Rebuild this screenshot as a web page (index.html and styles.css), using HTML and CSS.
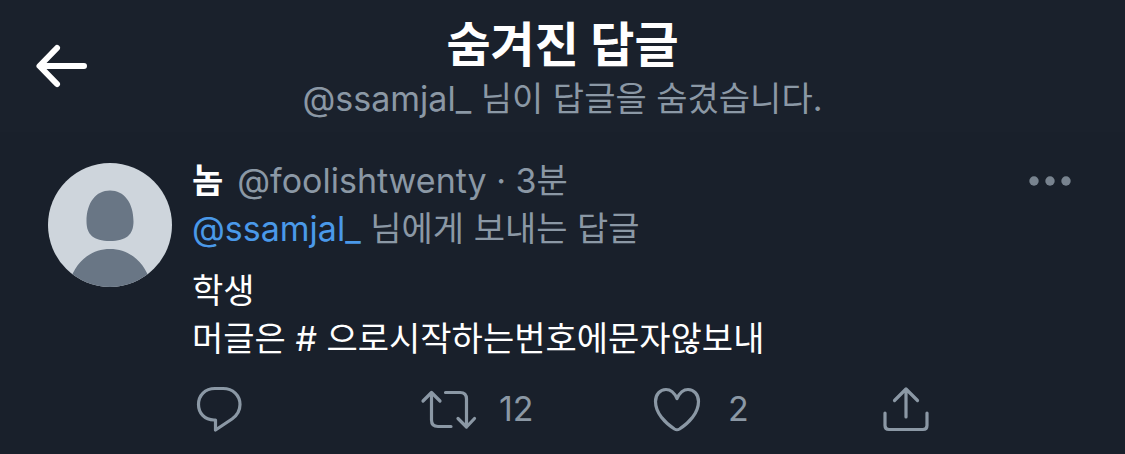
FILE: index.html
```html
<!DOCTYPE html>
<html lang="ko">
<head>
<meta charset="utf-8">
<meta name="viewport" content="width=device-width, initial-scale=1">
<title>숨겨진 답글</title>
<link rel="stylesheet" href="styles.css">
</head>
<body>
<header class="topbar">
  <button class="icon-button back" type="button" aria-label="뒤로">
    <svg width="52" height="44" viewBox="0 0 52 44" fill="none" stroke="currentColor" stroke-width="6" stroke-linecap="round" stroke-linejoin="round"><path d="M21 4 3.500 22 21 40M4 22h44"/></svg>
  </button>
  <div class="heading">
    <h1 class="title">숨겨진 답글</h1>
    <p class="subtitle">@ssamjal_ 님이 답글을 숨겼습니다.</p>
  </div>
</header>
<main>
  <article class="post">
    <svg class="avatar" viewBox="0 0 124 124" role="img" aria-label="프로필 사진">
      <defs><clipPath id="round"><circle cx="62" cy="62" r="62"/></clipPath></defs>
      <g clip-path="url(#round)">
        <path fill="#ced5dc" d="M0 0h124v124H0z"/>
        <path fill="#697685" d="M62 27.500c14 0 23.500 12 23.500 31 0 13-7 19.500-23.500 19.500s-23.500-6.500-23.500-19.500c0-19 9.500-31 23.500-31zM22 118c5-18 20-32 40-32s35 14 40 32v6H22z"/>
      </g>
    </svg>
    <div class="content">
      <div class="byline">
        <span class="name">놈</span>
        <span class="meta">@foolishtwenty · 3분</span>
        <button class="icon-button more" type="button" aria-label="더 보기">
          <svg width="42" height="10" viewBox="0 0 42 10" fill="currentColor"><circle cx="5" cy="5" r="4.700"/><circle cx="21" cy="5" r="4.700"/><circle cx="37" cy="5" r="4.700"/></svg>
        </button>
      </div>
      <p class="reply-to"><a class="mention" href="#ssamjal_">@ssamjal_</a> 님에게 보내는 답글</p>
      <p class="text">학생<br>머글은 # 으로시작하는번호에문자않보내</p>
      <div class="actions">
        <button class="icon-button action" type="button" aria-label="답글">
          <svg width="54" height="46" viewBox="0 0 54 46" fill="none" stroke="currentColor" stroke-width="3.200" stroke-linejoin="round"><path d="M23 2.500h8C41 2.500 48 9.500 48 18.500c0 6-3 11-8 14.500L23.500 44V34H22C12.500 34 6.500 27 6.500 18.500 6.500 9.500 13 2.500 23 2.500z"/></svg>
        </button>
        <button class="icon-button action" type="button" aria-label="리트윗 12">
          <svg width="54" height="46" viewBox="0 0 54 46" fill="none" stroke="currentColor" stroke-width="3.200" stroke-linecap="round" stroke-linejoin="round"><path d="M2 15 10.500 6.500 19 15M10.500 7v27q0 6.500 6.500 6.500H30M24.500 6.500H39q6.500 0 6.500 6.500v27.500M37 32.500 45.500 41l8-8.500"/></svg>
          <span>12</span>
        </button>
        <button class="icon-button action" type="button" aria-label="마음 2">
          <svg width="54" height="46" viewBox="0 0 54 46" fill="none" stroke="currentColor" stroke-width="3.200" stroke-linejoin="round"><path d="M27 12.500C24 6 20 3.500 16 3.500c-6 0-10.500 5-10.500 12C5.500 27 15 37 24.500 43q2.500 1.500 5 0C39 37 48.500 27 48.500 15.500c0-7-4.500-12-10.500-12-4 0-8 2.500-11 9z"/></svg>
          <span>2</span>
        </button>
        <button class="icon-button action" type="button" aria-label="공유">
          <svg width="54" height="46" viewBox="0 0 54 46" fill="none" stroke="currentColor" stroke-width="3.200" stroke-linecap="round" stroke-linejoin="round"><path d="M27 31V3M15.500 14.500 27 3l11.500 11.500M6 27v12.500q0 4 4 4h34q4 0 4-4V27"/></svg>
        </button>
      </div>
    </div>
  </article>
</main>
</body>
</html>
```
FILE: styles.css
```css
* {
  box-sizing: border-box;
}

body {
  margin: 0;
  background: #19202b;
  color: #fff;
  font-family: Inter, "Noto Sans CJK KR", sans-serif;
  font-size: 34px;
  line-height: 48px;
}

h1,
p {
  margin: 0;
}

.icon-button {
  display: flex;
  align-items: center;
  padding: 0;
  border: 0;
  background: none;
  color: inherit;
  font: inherit;
  cursor: pointer;
}

.icon-button svg {
  flex: none;
  overflow: visible;
}

.topbar {
  display: grid;
  grid-template-columns: 52px 1fr 52px;
  align-items: center;
  padding: 0 36px;
  background: #1a212c;
}

.heading {
  padding: 15px 0 9px;
  text-align: center;
}

.title {
  font-size: 48px;
  font-weight: 700;
  line-height: 60px;
}

.subtitle,
.meta,
.reply-to {
  color: #8b98a5;
}

.post {
  display: flex;
  gap: 20px;
  padding: 25px 54px 19px 48px;
}

.avatar {
  flex: none;
  width: 124px;
  height: 124px;
  margin-top: 6px;
}

.content {
  flex: 1;
  min-width: 0;
}

.byline {
  display: flex;
  gap: 14px;
}

.name {
  font-weight: 700;
}

.more {
  margin-left: auto;
  color: #78838f;
}

.mention {
  color: #4a99e9;
  text-decoration: none;
}

.text {
  margin-top: 14px;
}

.actions {
  display: grid;
  grid-template-columns: repeat(3, 1fr) 192px;
  margin-top: 23px;
  color: #8b98a5;
}

.action {
  gap: 24px;
  line-height: 46px;
}
```
